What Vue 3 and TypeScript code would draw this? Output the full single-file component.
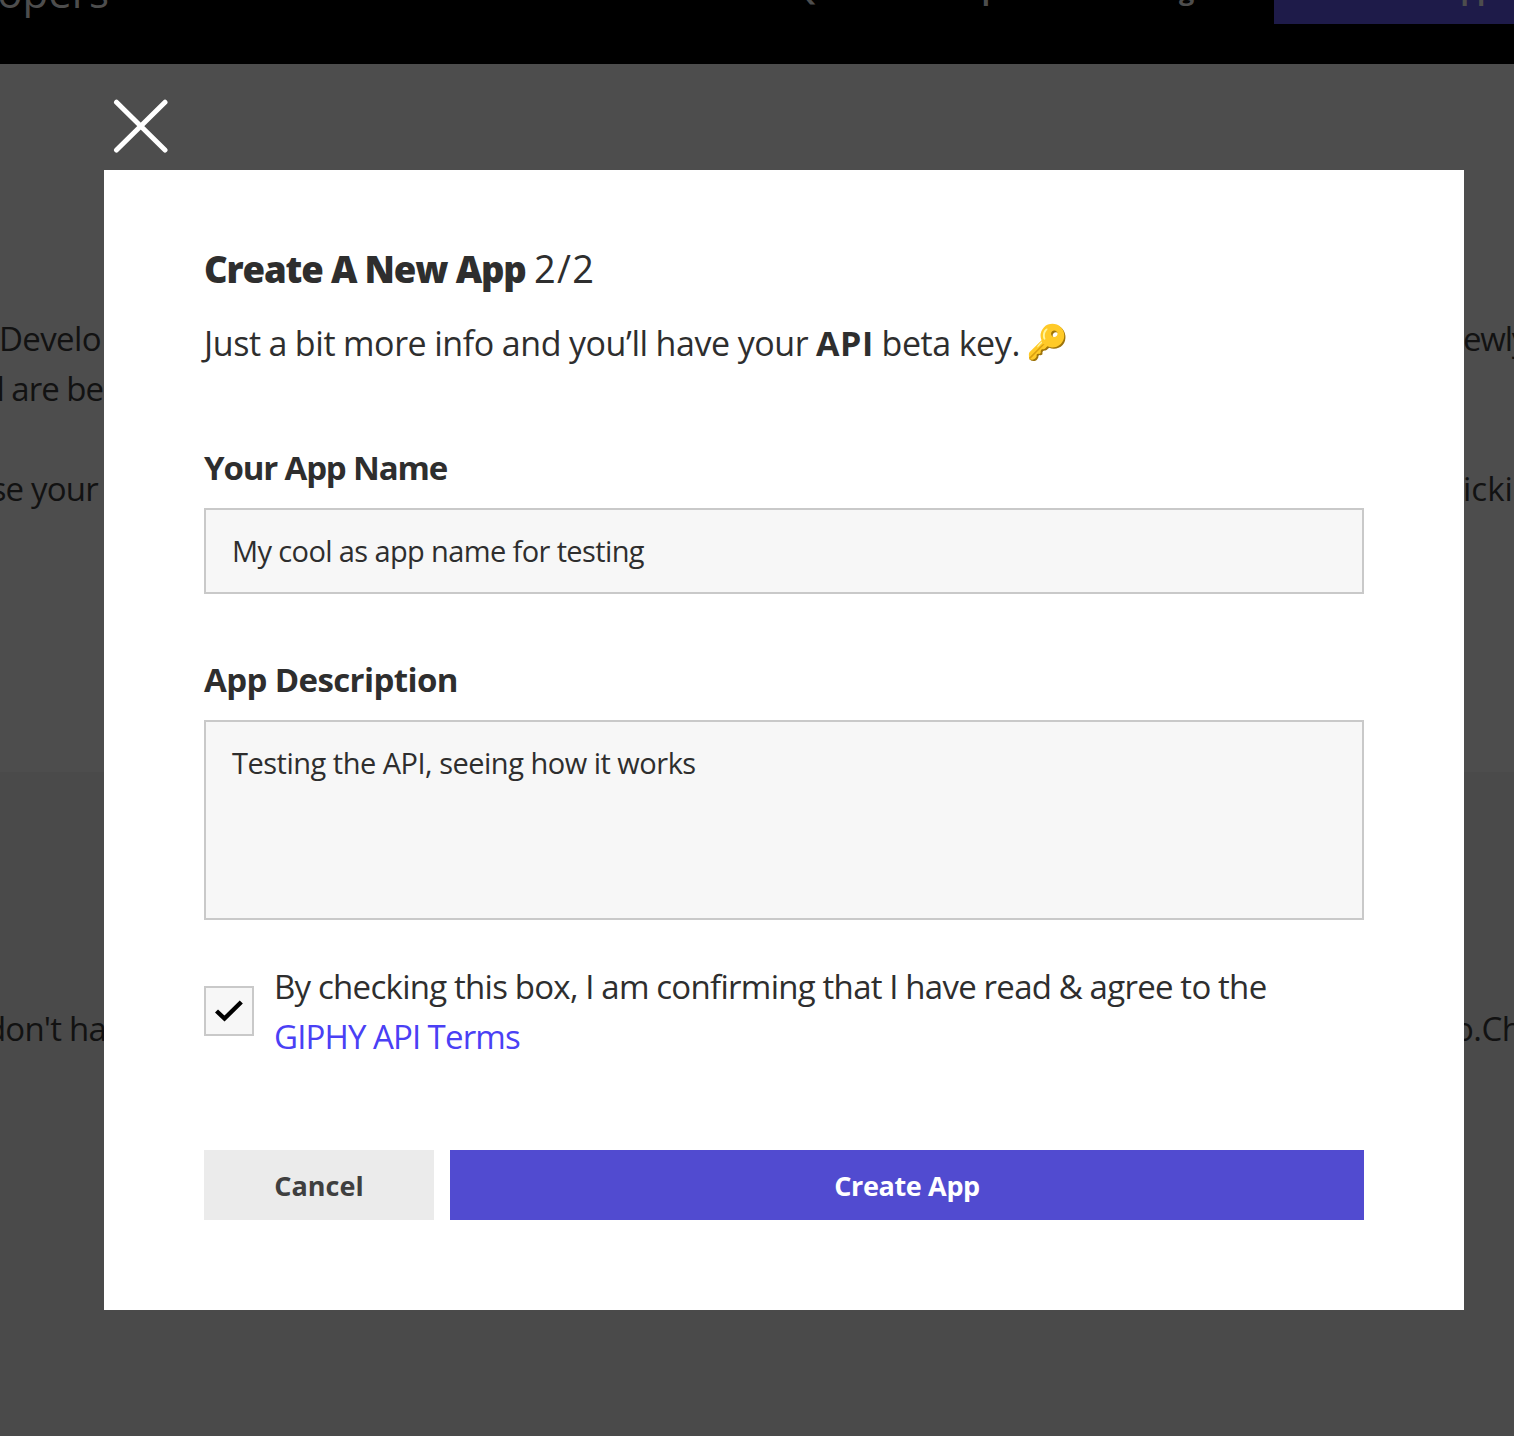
<script setup lang="ts">
import { ref } from 'vue'

const appName = ref('My cool as app name for testing')
const description = ref('Testing the API, seeing how it works')
const agreed = ref(true)

const intro = [
  { left: 'Develo', right: 'ewly', cls: 'r1' },
  { left: 'l are be', right: '', cls: 'r2' },
  { left: '', right: '', cls: 'r3' },
  { left: 'se your', right: 'icki', cls: 'r4' },
]
</script>

<template>
  <div class="page">
    <header class="topbar">
      <div class="brand">Developers</div>
      <nav class="nav">
        <a class="docs">Docs</a>
        <a class="faq">FAQ</a>
        <a class="explorer">Explorer</a>
        <a class="blog">Blog</a>
      </nav>
      <div class="cta">Create an App</div>
    </header>

    <section class="intro">
      <div v-for="row in intro" :key="row.cls" class="row" :class="row.cls">
        <span class="left">{{ row.left }}</span>
        <span class="right">{{ row.right }}</span>
      </div>
    </section>
    <section class="empty">
      <div class="row r5">
        <span class="left">don't ha</span>
        <span class="right">o.Ch</span>
      </div>
    </section>

    <div class="overlay">
      <button class="close" type="button" aria-label="Close">
        <svg width="56" height="56" viewBox="0 0 56 56">
          <path d="M3.5 3.2 52 51M52 3.2 3.5 51" stroke="#fff" stroke-width="5" stroke-linecap="round" />
        </svg>
      </button>
      <form class="modal" @submit.prevent>
        <h1 class="title">Create A New App <span class="step">2/2</span></h1>
        <p class="lead">Just a bit more info and you’ll have your <b>API</b> beta key. <span class="key">🔑</span></p>

        <label class="label" for="name">Your App Name</label>
        <input id="name" v-model="appName" class="field name" type="text" />

        <label class="label" for="desc">App Description</label>
        <textarea id="desc" v-model="description" class="field area"></textarea>

        <div class="terms">
          <button class="box" type="button" role="checkbox" :aria-checked="agreed" @click="agreed = !agreed">
            <svg v-if="agreed" width="28" height="22" viewBox="0 0 28 22">
              <path d="M1.5 11 9.5 18.5 26.3 2" fill="none" stroke="#000" stroke-width="4.4" />
            </svg>
          </button>
          <div class="terms-text">
            <div>By checking this box, I am confirming that I have read &amp; agree to the</div>
            <a class="link">GIPHY API Terms</a>
          </div>
        </div>

        <div class="actions">
          <button class="btn cancel" type="button">Cancel</button>
          <button class="btn create" type="submit">Create App</button>
        </div>
      </form>
    </div>
  </div>
</template>

<style>
body {
  margin: 0;
  background: #4a4a4a;
}
</style>

<style scoped>
.page {
  position: relative;
  width: 1514px;
  height: 1436px;
  overflow: hidden;
  font-family: "Open Sans", "Noto Sans", sans-serif;
  font-weight: 380;
  background: #4a4a4a;
}
.topbar {
  box-sizing: border-box;
  height: 64px;
  overflow: hidden;
  display: flex;
  background: #000;
  color: #4d4d4d;
}
.brand {
  width: 109px;
  height: 70px;
  margin-top: -46px;
  display: flex;
  justify-content: flex-end;
  flex: none;
  font-size: 42px;
  line-height: 76px;
}
.nav {
  display: flex;
  flex: none;
  width: 1165px;
  margin-top: -46px;
  height: 70px;
  line-height: 72px;
  font-size: 27px;
  font-weight: 700;
}
.docs { margin-left: 511px; width: 142px; }
.faq { width: 189px; }
.explorer { width: 185px; }
.cta {
  flex: none;
  box-sizing: border-box;
  width: 240px;
  height: 70px;
  margin-top: -46px;
  padding-left: 37px;
  line-height: 72px;
  font-size: 27px;
  font-weight: 700;
  letter-spacing: -0.6px;
  white-space: nowrap;
  background: #1e1b49;
}
.intro {
  box-sizing: border-box;
  height: 708px;
  padding-top: 250px;
  background: #4d4d4d;
}
.empty {
  height: 664px;
  padding-top: 232px;
  box-sizing: border-box;
}
.row {
  display: flex;
  justify-content: space-between;
  height: 50px;
  line-height: 50px;
  font-size: 33px;
  letter-spacing: -0.5px;
  color: #121212;
}
.left {
  width: 105px;
  display: flex;
  justify-content: flex-end;
  white-space: nowrap;
}
.right {
  width: 51px;
  overflow: hidden;
  white-space: nowrap;
}
.r1 .left { width: 101px; letter-spacing: -0.6px; }
.r1 .right { letter-spacing: -1.2px; }
.r2 .left { width: 103px; letter-spacing: -1px; }
.r4 .left { width: 98px; letter-spacing: -0.8px; }
.r4 .right { letter-spacing: 0; }
.r5 .left { width: 106px; letter-spacing: -0.8px; }
.r5 .right { text-indent: -9px; }
.overlay {
  position: absolute;
  inset: 0;
  padding: 99px 50px 126px 104px;
  display: flex;
  flex-direction: column;
}
button {
  border: 0;
  padding: 0;
  font-family: inherit;
}
.close {
  width: 56px;
  height: 56px;
  margin: 0 0 15px 9px;
  background: none;
}
svg { display: block; }
.modal {
  box-sizing: border-box;
  width: 1360px;
  height: 1140px;
  padding: 73px 100px 0;
  display: flex;
  flex-direction: column;
  background: #fff;
  color: #2e2e2e;
}
.title {
  margin: 0;
  height: 50px;
  line-height: 50px;
  font-size: 36.5px;
  font-weight: 800;
  letter-spacing: -1.15px;
  white-space: nowrap;
}
.step {
  font-size: 38px;
  font-weight: 370;
  letter-spacing: 1.3px;
}
.lead {
  margin: 25px 0 0;
  height: 50px;
  line-height: 50px;
  font-size: 34px;
  letter-spacing: -0.4px;
  word-spacing: -0.6px;
  white-space: nowrap;
}
.lead b { font-weight: 700; letter-spacing: 0.5px; }
.key {
  position: relative;
  top: -2px;
  left: -2px;
  font-size: 34px;
  line-height: 1;
}
.label {
  margin-top: 75px;
  height: 50px;
  line-height: 50px;
  font-size: 33px;
  font-weight: 700;
  letter-spacing: -1.15px;
}
.field {
  box-sizing: border-box;
  width: 1160px;
  height: 86px;
  margin: 15px 0 0;
  padding: 0 26px;
  border: 2px solid #c9c9c9;
  border-radius: 0;
  outline: none;
  background: #f7f7f7;
  color: #2e2e2e;
  font-family: inherit;
  font-size: 29px;
  font-weight: 380;
  letter-spacing: -0.5px;
}
.name {
  padding-bottom: 1px;
  letter-spacing: -0.62px;
}
.field + .label {
  margin-top: 61px;
  letter-spacing: -0.6px;
}
.area {
  display: block;
  height: 200px;
  padding: 21px 26px;
  line-height: 40px;
  resize: none;
}
.terms {
  display: flex;
  margin-top: 42px;
  height: 100px;
}
.box {
  box-sizing: border-box;
  flex: none;
  width: 50px;
  height: 50px;
  margin: 24px 20px 0 0;
  border: 2px solid #c9c9c9;
  background: #f7f7f7;
  display: flex;
  align-items: center;
  justify-content: center;
}
.terms-text {
  line-height: 50px;
  font-size: 33px;
  letter-spacing: -0.7px;
  word-spacing: -0.4px;
  white-space: nowrap;
}
.link {
  color: #4a40f5;
  letter-spacing: -0.85px;
}
.actions {
  display: flex;
  gap: 16px;
  margin-top: 88px;
}
.btn {
  height: 70px;
  font-size: 27px;
  font-weight: 700;
}
.cancel {
  width: 230px;
  background: #ebebeb;
  color: #3f3f3f;
}
.create {
  flex: 1;
  background: #514bd0;
  color: #fff;
  letter-spacing: -0.35px;
}
</style>
